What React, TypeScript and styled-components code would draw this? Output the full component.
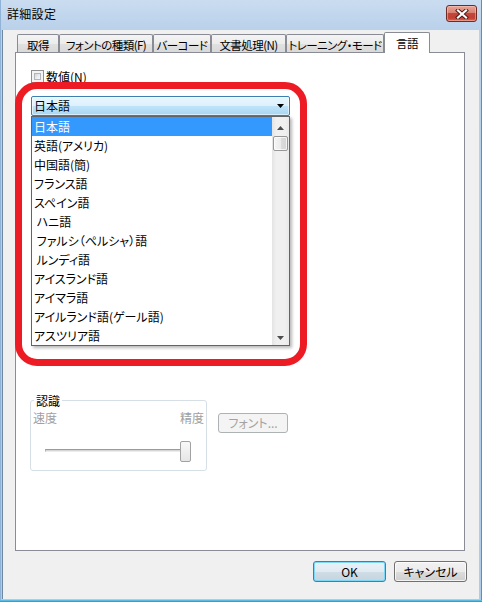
import React from "react";
import styled, { createGlobalStyle } from "styled-components";

const FONT = `"Noto Sans CJK JP", "Noto Sans", sans-serif`;

const GlobalStyle = createGlobalStyle`
  html, body { margin: 0; padding: 0; background: #ffffff; }
  body { font-family: ${FONT}; font-size: 12px; }
  * { box-sizing: border-box; }
`;

const Window = styled.div`
  width: 482px;
  height: 602px;
  display: flex;
  flex-direction: column;
  padding: 0 3px 3px 3px;
  background: linear-gradient(180deg, #cadcf0 0px, #b9d1ea 30px, #aecbea 100%);
  box-shadow: inset 0 -1px 0 #2aa3d6, inset 0 -2px 0 #58bde6, inset -1px 0 0 #2aa3d6, inset 1px 0 0 #8fb2d6;
  font-family: ${FONT};
  font-feature-settings: "palt";
  color: #000;
`;

const TitleBar = styled.div`
  flex: none;
  height: 30px;
  display: flex;
  align-items: flex-start;
  padding: 0 2px 0 4px;
`;

const Title = styled.div`
  margin-top: 7px;
  font-size: 12px;
  line-height: 14px;
  letter-spacing: 0.3px;
`;

const CloseButton = styled.div`
  margin-left: auto;
  margin-top: 5px;
  width: 31px;
  height: 17px;
  border: 1px solid #6e2a25;
  border-radius: 3px;
  background: linear-gradient(180deg, #e9a596 0%, #d98172 45%, #c4463a 50%, #c23f33 80%, #dd6a55 100%);
  box-shadow: inset 0 0 0 1px rgba(255, 210, 200, 0.45);
  display: flex;
  align-items: center;
  justify-content: center;
`;

const Client = styled.div`
  flex: 1;
  display: flex;
  flex-direction: column;
  background: #f0f0f0;
  box-shadow: -1px 0 0 #6f87a3;
`;

const TabStrip = styled.div`
  display: flex;
  align-items: flex-end;
  height: 20px;
  margin: 2px 0 0 14px;
  position: relative;
  z-index: 1;
`;

const Tab = styled.div<{ $w: number; $active?: boolean }>`
  width: ${(p) => p.$w}px;
  height: ${(p) => (p.$active ? 21 : 18)}px;
  margin-bottom: ${(p) => (p.$active ? -1 : 0)}px;
  border: 1px solid #898c95;
  border-bottom: none;
  border-radius: 2px 2px 0 0;
  background: ${(p) =>
    p.$active
      ? "#ffffff"
      : "linear-gradient(180deg, #f4f4f4 0%, #ececec 50%, #e1e1e1 51%, #d9d9d9 100%)"};
  display: flex;
  align-items: center;
  justify-content: center;
  padding-top: ${(p) => (p.$active ? 0 : 2)}px;
  font-size: 11.5px;
  line-height: 14px;
  white-space: nowrap;
  letter-spacing: -0.55px;
  overflow: hidden;
`;

const Panel = styled.div`
  position: relative;
  margin-left: 12px;
  width: 450px;
  height: 499px;
  border: 1px solid #898c95;
  background: #ffffff;
  display: flex;
  flex-direction: column;
  padding-left: 15px;
`;

const CheckRow = styled.div`
  margin-top: 17px;
  height: 13px;
  display: flex;
  align-items: center;
  gap: 2px;
`;

const CheckBox = styled.div`
  width: 13px;
  height: 13px;
  border: 1px solid #8e8f8f;
  background: #f4f4f4;
  padding: 2px;
`;

const CheckInner = styled.div`
  width: 100%;
  height: 100%;
  border: 1px solid #b2b6bb;
  background: linear-gradient(135deg, #d3d6da 0%, #eceef0 60%, #f8f8f8 100%);
`;

const Label = styled.span<{ $disabled?: boolean }>`
  font-size: 12px;
  line-height: 14px;
  color: ${(p) => (p.$disabled ? "#a0a0a0" : "#000")};
  white-space: nowrap;
`;

const ComboWrap = styled.div`
  position: relative;
  margin-top: 13px;
  width: 259px;
  height: 20px;
  z-index: 5;
`;

const Combo = styled.div`
  height: 20px;
  border: 1px solid #3c7fb1;
  border-radius: 2px;
  background: linear-gradient(180deg, #eaf6fd 0%, #dcf1fc 48%, #bfe4f9 52%, #a7d6f1 100%);
  box-shadow: inset 0 0 0 1px rgba(255, 255, 255, 0.55);
  display: flex;
  align-items: center;
  justify-content: space-between;
  padding: 0 5px 0 2px;
  font-size: 12px;
  line-height: 14px;
`;

const DropList = styled.div`
  position: absolute;
  top: 20px;
  left: 0;
  width: 259px;
  height: 230px;
  border: 1px solid #646464;
  background: #ffffff;
  display: flex;
  box-shadow: 2px 2px 3px rgba(0, 0, 0, 0.28);
`;

const Items = styled.div`
  flex: 1;
  display: flex;
  flex-direction: column;
`;

const Item = styled.div<{ $selected?: boolean }>`
  height: 19px;
  line-height: 19px;
  padding-left: 2px;
  font-size: 12px;
  white-space: pre;
  background: ${(p) => (p.$selected ? "#3399ff" : "transparent")};
  color: ${(p) => (p.$selected ? "#ffffff" : "#000000")};
`;

const ScrollBar = styled.div`
  width: 17px;
  display: flex;
  flex-direction: column;
  background: linear-gradient(90deg, #e4e4e4 0%, #f0f0f0 25%, #f0f0f0 75%, #e9e9e9 100%);
`;

const ScrollBtn = styled.div<{ $down?: boolean }>`
  height: 17px;
  display: flex;
  justify-content: center;
  align-items: center;
  padding-top: ${(p) => (p.$down ? 2 : 4)}px;
  margin-top: ${(p) => (p.$down ? "auto" : "0")};
`;

const Thumb = styled.div`
  margin: 2px 1px 0 1px;
  height: 15px;
  border: 1px solid #979797;
  border-radius: 2px;
  background: linear-gradient(90deg, #f5f5f5 0%, #ececec 50%, #dcdcdc 51%, #d4d4d4 100%);
  box-shadow: inset 0 0 0 1px rgba(255, 255, 255, 0.7);
`;

const Highlight = styled.div`
  position: absolute;
  left: -1px;
  top: 29px;
  width: 292px;
  height: 284px;
  border: 7px solid #ed1c24;
  border-radius: 22px;
  pointer-events: none;
  z-index: 10;
`;

const GroupRow = styled.div`
  margin-top: 284px;
  margin-left: -1px;
  display: flex;
  align-items: flex-start;
  gap: 11px;
`;

const GroupBox = styled.div`
  position: relative;
  width: 177px;
  height: 71px;
  border: 1px solid #d5dfe5;
  border-radius: 3px;
  padding: 10px 2px 0 2px;
  display: flex;
  flex-direction: column;
`;

const Legend = styled.div`
  position: absolute;
  top: -7px;
  left: 3px;
  padding: 0 2px;
  background: #ffffff;
  font-size: 12px;
  line-height: 14px;
  color: #000;
`;

const ScaleLabels = styled.div`
  display: flex;
  justify-content: space-between;
  height: 14px;
`;

const Slider = styled.div`
  position: relative;
  margin: 16px 0 0 12px;
  width: 146px;
  height: 21px;
`;

const Track = styled.div`
  margin-top: 8px;
  height: 3px;
  border-top: 1px solid #9b9b9b;
  border-left: 1px solid #b0b0b0;
  background: #d6d6d6;
  border-bottom: 1px solid #ececec;
`;

const SliderThumb = styled.div`
  position: absolute;
  right: 0;
  top: 0;
  width: 11px;
  height: 21px;
  border: 1px solid #a2a2a2;
  border-radius: 2px;
  background: linear-gradient(180deg, #f8f8f8 0%, #efefef 50%, #e6e6e6 100%);
`;

const Button = styled.div<{ $default?: boolean; $disabled?: boolean; $w: number }>`
  width: ${(p) => p.$w}px;
  height: ${(p) => (p.$disabled ? 20 : 21)}px;
  border: 1px solid ${(p) => (p.$default ? "#3c7fb1" : p.$disabled ? "#adb2b5" : "#707070")};
  border-radius: 3px;
  background: ${(p) =>
    p.$disabled
      ? "#f4f4f4"
      : p.$default
      ? "linear-gradient(180deg, #eaf2f8 0%, #e0eaf1 50%, #d0dde6 51%, #c5d4df 100%)"
      : "linear-gradient(180deg, #f2f2f2 0%, #ebebeb 50%, #dddddd 51%, #cfcfcf 100%)"};
  box-shadow: ${(p) =>
    p.$default ? "inset 0 0 0 1px #7fd7f7" : p.$disabled ? "none" : "inset 0 0 0 1px rgba(255,255,255,0.75)"};
  display: flex;
  align-items: center;
  justify-content: center;
  font-size: 12px;
  line-height: 14px;
  color: ${(p) => (p.$disabled ? "#a3a3a3" : "#000")};
  white-space: nowrap;
`;

const FontButtonWrap = styled.div`
  margin-top: 13px;
`;

const ButtonRow = styled.div`
  margin-top: 10px;
  display: flex;
  justify-content: flex-end;
  gap: 8px;
  padding-right: 12px;
`;

const tabs = [
  { label: "取得", w: 42 },
  { label: "フォントの種類(F)", w: 94 },
  { label: "バーコード", w: 58 },
  { label: "文書処理(N)", w: 75 },
  { label: "トレーニング・モード", w: 98 },
  { label: "言語", w: 46, active: true },
];

const languages = [
  "日本語",
  "英語(アメリカ)",
  "中国語(簡)",
  "フランス語",
  "スペイン語",
  " ハニ語",
  " ファルシ（ペルシャ）語",
  " ルンディ語",
  "アイスランド語",
  "アイマラ語",
  "アイルランド語(ゲール語)",
  "アスツリア語",
];

const DownArrow = ({ color = "#000" }: { color?: string }) => (
  <svg width="7" height="4" viewBox="0 0 7 4">
    <path d="M0 0 H7 L3.5 4 Z" fill={color} />
  </svg>
);

const UpArrow = ({ color = "#4d4d4d" }: { color?: string }) => (
  <svg width="7" height="4" viewBox="0 0 7 4">
    <path d="M0 4 H7 L3.5 0 Z" fill={color} />
  </svg>
);

const CloseGlyph = () => (
  <svg width="14" height="10" viewBox="0 0 14 10">
    <path d="M3 1.5 L11 8.5 M11 1.5 L3 8.5" stroke="#4a1612" strokeWidth="4" strokeLinecap="square" />
    <path d="M3 1.5 L11 8.5 M11 1.5 L3 8.5" stroke="#ffffff" strokeWidth="2.2" strokeLinecap="square" />
  </svg>
);

export default function App() {
  return (
    <>
      <GlobalStyle />
      <Window>
        <TitleBar>
          <Title>詳細設定</Title>
          <CloseButton>
            <CloseGlyph />
          </CloseButton>
        </TitleBar>
        <Client>
          <TabStrip>
            {tabs.map((t) => (
              <Tab key={t.label} $w={t.w} $active={t.active}>
                {t.label}
              </Tab>
            ))}
          </TabStrip>
          <Panel>
            <CheckRow>
              <CheckBox>
                <CheckInner />
              </CheckBox>
              <Label>数値(N)</Label>
            </CheckRow>
            <ComboWrap>
              <Combo>
                <span>日本語</span>
                <DownArrow />
              </Combo>
              <DropList>
                <Items>
                  {languages.map((l, i) => (
                    <Item key={l} $selected={i === 0}>
                      {l}
                    </Item>
                  ))}
                </Items>
                <ScrollBar>
                  <ScrollBtn>
                    <UpArrow />
                  </ScrollBtn>
                  <Thumb />
                  <ScrollBtn $down>
                    <DownArrow color="#4d4d4d" />
                  </ScrollBtn>
                </ScrollBar>
              </DropList>
            </ComboWrap>
            <GroupRow>
              <GroupBox>
                <Legend>認識</Legend>
                <ScaleLabels>
                  <Label $disabled>速度</Label>
                  <Label $disabled>精度</Label>
                </ScaleLabels>
                <Slider>
                  <Track />
                  <SliderThumb />
                </Slider>
              </GroupBox>
              <FontButtonWrap>
                <Button $w={70} $disabled>
                  フォント...
                </Button>
              </FontButtonWrap>
            </GroupRow>
            <Highlight />
          </Panel>
          <ButtonRow>
            <Button $w={73} $default>
              OK
            </Button>
            <Button $w={73}>キャンセル</Button>
          </ButtonRow>
        </Client>
      </Window>
    </>
  );
}
